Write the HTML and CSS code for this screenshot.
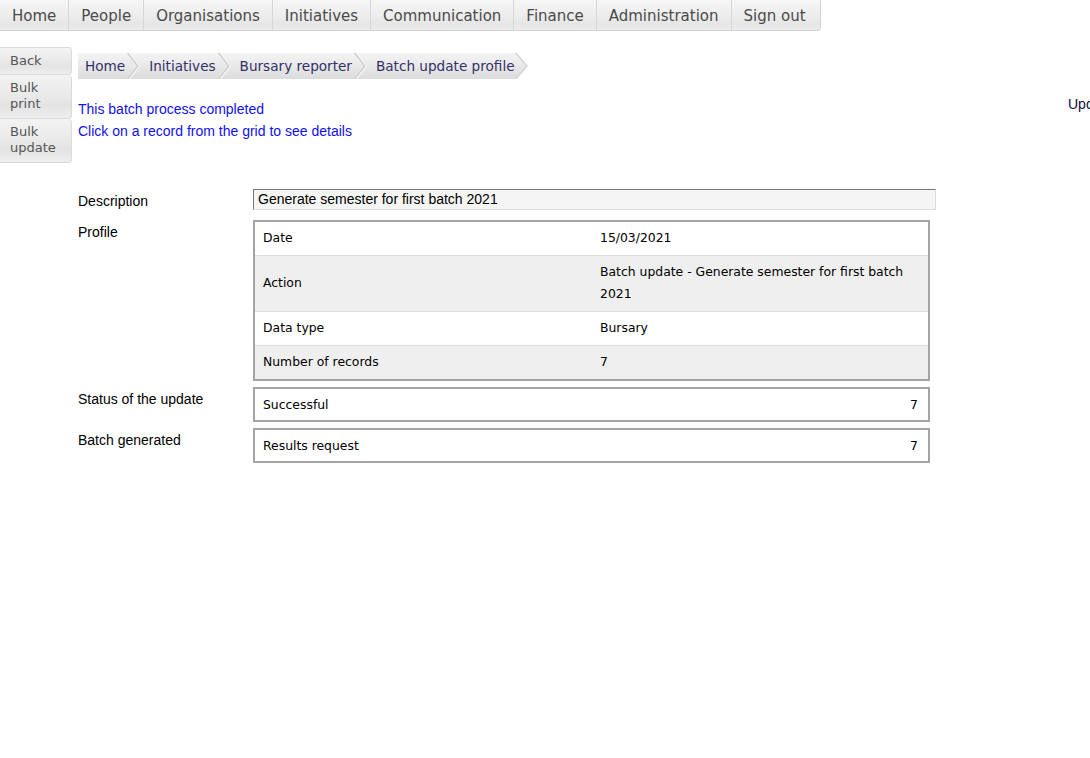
FILE: index.html
```html
<!DOCTYPE html>
<html lang="en">
<head>
<meta charset="utf-8">
<title>Batch update profile</title>
<link rel="stylesheet" href="styles.css">
</head>
<body>
<nav class="topnav">
  <a class="nav-item">Home</a>
  <a class="nav-item">People</a>
  <a class="nav-item">Organisations</a>
  <a class="nav-item">Initiatives</a>
  <a class="nav-item">Communication</a>
  <a class="nav-item">Finance</a>
  <a class="nav-item">Administration</a>
  <a class="nav-item nav-last">Sign out</a>
</nav>
<div class="page">
  <aside class="sidebar">
    <a class="side-btn side-first">Back</a>
    <a class="side-btn">Bulk<br>print</a>
    <a class="side-btn">Bulk<br>update</a>
  </aside>
  <main class="main">
    <div class="crumbs">
      <a class="crumb">Home<svg class="chev" width="14" height="26" viewBox="0 0 14 26"><polyline points="1,-1 12,13 1,27" fill="none" stroke="#fbfbfb" stroke-width="2"/><polyline points="0,-1 11,13 0,27" fill="none" stroke="#cfcfcf" stroke-width="1.5"/></svg></a>
      <a class="crumb">Initiatives<svg class="chev" width="14" height="26" viewBox="0 0 14 26"><polyline points="1,-1 12,13 1,27" fill="none" stroke="#fbfbfb" stroke-width="2"/><polyline points="0,-1 11,13 0,27" fill="none" stroke="#cfcfcf" stroke-width="1.5"/></svg></a>
      <a class="crumb">Bursary reporter<svg class="chev" width="14" height="26" viewBox="0 0 14 26"><polyline points="1,-1 12,13 1,27" fill="none" stroke="#fbfbfb" stroke-width="2"/><polyline points="0,-1 11,13 0,27" fill="none" stroke="#cfcfcf" stroke-width="1.5"/></svg></a>
      <a class="crumb crumb-last">Batch update profile<svg class="chev-end" width="14" height="26" viewBox="0 0 14 26"><defs><linearGradient id="cg" x1="0" y1="0" x2="0" y2="1"><stop offset="0" stop-color="#f4f4f4"/><stop offset="1" stop-color="#dcdcdc"/></linearGradient></defs><polygon points="0,0 1,0 12,13 1,26 0,26" fill="url(#cg)"/><polyline points="0,-1 12,13 0,27" fill="none" stroke="#d4d4d4" stroke-width="1.5"/></svg></a>
    </div>
    <div class="msg-row">
      <div class="messages">
        <p class="msg">This batch process completed</p>
        <p class="msg">Click on a record from the grid to see details</p>
      </div>
      <div class="side-note">Update</div>
    </div>
    <div class="form">
      <div class="form-row row-desc">
        <div class="label">Description</div>
        <div class="input">Generate semester for first batch 2021</div>
      </div>
      <div class="form-row">
        <div class="label">Profile</div>
        <div class="box">
          <div class="prow"><span class="pkey">Date</span><span class="pval">15/03/2021</span></div>
          <div class="prow alt"><span class="pkey">Action</span><span class="pval">Batch update - Generate semester for first batch 2021</span></div>
          <div class="prow"><span class="pkey">Data type</span><span class="pval">Bursary</span></div>
          <div class="prow alt last"><span class="pkey">Number of records</span><span class="pval">7</span></div>
        </div>
      </div>
      <div class="form-row">
        <div class="label">Status of the update</div>
        <div class="box single"><span>Successful</span><span>7</span></div>
      </div>
      <div class="form-row">
        <div class="label">Batch generated</div>
        <div class="box single"><span>Results request</span><span>7</span></div>
      </div>
    </div>
  </main>
</div>
</body>
</html>
```
FILE: styles.css
```css
html, body {
  margin: 0;
  padding: 0;
  overflow: hidden;
  background: #fff;
}
body {
  font-family: "Liberation Sans", Arial, sans-serif;
  font-size: 14px;
  color: #000;
}
.topnav {
  display: flex;
  height: 30px;
  width: max-content;
  border-bottom: 1px solid #d2d2d2;
  border-right: 1px solid #d2d2d2;
  border-bottom-right-radius: 4px;
  background: linear-gradient(#f6f6f6, #ececec 55%, #e6e6e6 80%, #ececec);
}
.nav-item {
  display: block;
  padding: 2px 12px 0;
  line-height: 28px;
  font-family: "DejaVu Sans", Verdana, sans-serif;
  font-size: 15px;
  color: #4a4a4a;
  border-right: 1px solid #d6d6d6;
}
.nav-item.nav-last { border-right: none; padding-right: 14px; }
.page {
  display: flex;
  align-items: flex-start;
}
.sidebar {
  width: 72px;
  margin-top: 16px;
  display: flex;
  flex-direction: column;
}
.side-btn {
  display: block;
  padding: 5px 10px 6px 10px;
  line-height: 16px;
  font-family: "DejaVu Sans", Verdana, sans-serif;
  font-size: 13px;
  color: #555;
  border: 1px solid #dadada;
  border-left: none;
  border-top: none;
  border-radius: 0 4px 4px 0;
  background: linear-gradient(#f3f3f3, #e9e9e9 50%, #e3e3e3 70%, #eeeeee);
}
.side-btn.side-first {
  border-top: 1px solid #dadada;
  padding-bottom: 5px;
}
.main {
  flex: 1;
  margin-left: 6px;
}
.crumbs {
  display: inline-flex;
  margin-top: 22px;
  height: 26px;
  background: linear-gradient(#f4f4f4, #dcdcdc);
}
.crumb {
  position: relative;
  display: block;
  padding: 0 22px 0 7px;
  line-height: 27px;
  font-family: "DejaVu Sans", Verdana, sans-serif;
  font-size: 13.6px;
  color: #31316a;
}
.crumb + .crumb { padding-left: 2px; }
.crumb.crumb-last { padding-right: 1px; }
.chev {
  position: absolute;
  right: 6px;
  top: 0;
}
.chev-end {
  position: absolute;
  right: -13px;
  top: 0;
}
.msg-row {
  display: flex;
  justify-content: space-between;
  margin-top: 19px;
}
.msg {
  margin: 0;
  line-height: 22px;
  color: #1010f0;
}
.side-note {
  width: 22px;
  margin-top: -5px;
  white-space: nowrap;
  color: #101038;
  line-height: 22px;
}
.form {
  margin-top: 47px;
}
.form-row {
  display: flex;
  align-items: flex-start;
  margin-bottom: 6px;
}
.form-row.row-desc { margin-bottom: 10px; }
.label {
  width: 175px;
  padding-top: 4px;
  line-height: 16px;
}
.input {
  width: 677px;
  height: 19px;
  line-height: 19px;
  padding-left: 4px;
  border: 1px solid #dcdcdc;
  border-top-color: #7a7a7a;
  border-left-color: #7a7a7a;
  background: #f5f5f5;
}
.box {
  width: 673px;
  border: 2px solid #a4a4a4;
  font-family: "DejaVu Sans", Verdana, sans-serif;
  font-size: 12.4px;
}
.prow {
  display: flex;
  align-items: center;
  border-bottom: 1px solid #dddddd;
}
.prow.last { border-bottom: none; }
.prow.alt { background: #efefef; }
.pkey {
  width: 317px;
  padding: 5px 10px 6px 8px;
  line-height: 22px;
}
.pval {
  flex: 1;
  padding: 5px 10px 6px;
  line-height: 22px;
}
.box.single {
  display: flex;
  justify-content: space-between;
  padding: 6px 10px 6px 8px;
  width: 655px;
  line-height: 19px;
}
```
